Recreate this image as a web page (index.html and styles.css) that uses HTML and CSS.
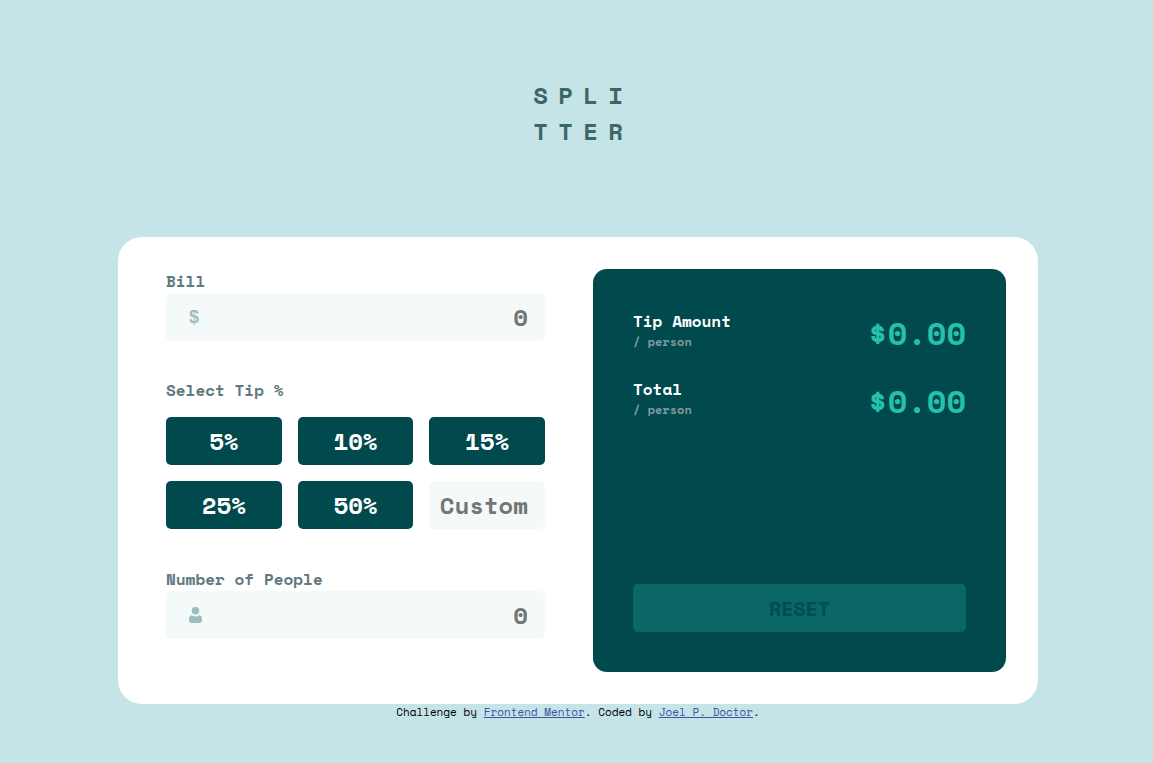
FILE: index.html
```html
<!DOCTYPE html>
<html lang="en">
<head>
  <meta charset="utf-8">
  <meta name="viewport" content="width=device-width, initial-scale=1">
  <title>Splitter | Tip calculator</title>
  <link rel="stylesheet" href="styles.css">
</head>
<body>
  <header class="header">
    <h1 class="logo" aria-label="Splitter">
      <span>S</span><span>P</span><span>L</span><span>I</span>
      <span>T</span><span>T</span><span>E</span><span>R</span>
    </h1>
  </header>

  <main class="card">
    <form class="form">
      <div class="field">
        <label class="label" for="bill">Bill</label>
        <div class="entry">
          <span class="entry-symbol" aria-hidden="true">$</span>
          <input class="input" id="bill" type="text" inputmode="decimal" placeholder="0">
        </div>
      </div>

      <div class="field">
        <label class="label label-spaced" for="custom">Select Tip %</label>
        <div class="tips">
          <button class="tip" type="button">5%</button>
          <button class="tip" type="button">10%</button>
          <button class="tip" type="button">15%</button>
          <button class="tip" type="button">25%</button>
          <button class="tip" type="button">50%</button>
          <input class="input input-custom" id="custom" type="text" inputmode="numeric" placeholder="Custom">
        </div>
      </div>

      <div class="field">
        <label class="label" for="people">Number of People</label>
        <div class="entry">
          <svg class="entry-icon" viewBox="0 0 13 16" width="13" height="16" aria-hidden="true">
            <circle cx="6.5" cy="3.8" r="3.8"/>
            <path d="M2.800 8.300C3.900 9.200 5.200 9.500 6.500 9.500S9.100 9.200 10.200 8.300C12.400 8.600 13 10.200 13 12V13.600Q13 16 10.600 16H2.400Q0 16 0 13.600V12C0 10.200 .6 8.600 2.800 8.300Z"/>
          </svg>
          <input class="input" id="people" type="text" inputmode="numeric" placeholder="0">
        </div>
      </div>
    </form>

    <section class="results">
      <div class="result">
        <div>
          <h2 class="result-name">Tip Amount</h2>
          <p class="result-unit">/ person</p>
        </div>
        <output class="amount">$0.00</output>
      </div>
      <div class="result">
        <div>
          <h2 class="result-name">Total</h2>
          <p class="result-unit">/ person</p>
        </div>
        <output class="amount">$0.00</output>
      </div>
      <button class="reset" type="button">RESET</button>
    </section>
  </main>

  <footer class="attribution">
    Challenge by <a href="#frontend-mentor">Frontend Mentor</a>. Coded by <a href="#author">Joel P. Doctor</a>.
  </footer>
</body>
</html>
```

FILE: styles.css
```css
* {
  box-sizing: border-box;
}

body {
  margin: 0;
  padding-left: 3px;
  background: #c5e4e7;
  font-family: "Space Mono", "Liberation Mono", monospace;
  font-size: 16px;
  line-height: 24px;
}

.header {
  display: flex;
  justify-content: center;
  padding: 77px 0 88px;
}

.logo {
  display: grid;
  grid-template-columns: repeat(4, 25px);
  margin: 0;
  color: #3d6666;
  font-size: 24px;
  font-weight: 700;
  line-height: 36px;
  text-align: center;
}

.card {
  display: grid;
  grid-template-columns: 1fr 1fr;
  gap: 30px;
  max-width: 920px;
  margin: 0 auto;
  padding: 32px;
  border-radius: 24px;
  background: #fff;
}

.form {
  display: flex;
  flex-direction: column;
  gap: 37px;
  padding: 0 18px 33px 16px;
}

.label {
  display: block;
  color: #5e7a7d;
  font-weight: 700;
}

.label-spaced {
  margin-bottom: 15px;
}

.entry {
  display: flex;
  align-items: center;
  height: 48px;
  padding-left: 23px;
  border-radius: 5px;
  background: #f4fafa;
}

.entry-symbol {
  flex: none;
  width: 13px;
  color: #9ebbbd;
  font-family: "Liberation Sans", Arial, sans-serif;
  font-size: 18px;
  font-weight: 700;
}

.entry-icon {
  flex: none;
  fill: #9ebbbd;
}

.input {
  flex: 1;
  min-width: 0;
  width: 100%;
  height: 48px;
  padding: 0 17px 0 8px;
  border: 0;
  border-radius: 5px;
  background: transparent;
  color: #00494d;
  font: inherit;
  font-size: 24px;
  font-weight: 700;
  text-align: right;
}

.input::placeholder {
  color: #757575;
  opacity: 1;
}

.input-custom {
  background: #f4fafa;
}

.tips {
  display: grid;
  grid-template-columns: repeat(3, 1fr);
  gap: 16px;
  margin-bottom: 1px;
}

.tip,
.reset {
  height: 48px;
  padding: 0;
  border: 0;
  border-radius: 5px;
  font: inherit;
  font-weight: 700;
  cursor: pointer;
}

.tip {
  background: #00494d;
  color: #fff;
  font-size: 24px;
}

.results {
  display: flex;
  flex-direction: column;
  gap: 20px;
  padding: 40px;
  border-radius: 14px;
  background: #00494d;
}

.result {
  display: flex;
  justify-content: space-between;
}

.result-name {
  margin: 0;
  color: #fff;
  font-size: 16px;
  font-weight: 700;
}

.result-unit {
  margin: 0;
  color: #7f9c9f;
  font-size: 12px;
  font-weight: 700;
  line-height: 18px;
}

.amount {
  color: #26c0ab;
  font-size: 32px;
  font-weight: 700;
  line-height: 48px;
}

.reset {
  margin-top: auto;
  padding-top: 2px;
  background: #0a6765;
  color: #004e50;
  font-size: 20px;
}

.attribution {
  color: #000;
  font-size: 11px;
  line-height: 17px;
  text-align: center;
}

.attribution a {
  color: #3e52a3;
}
```
